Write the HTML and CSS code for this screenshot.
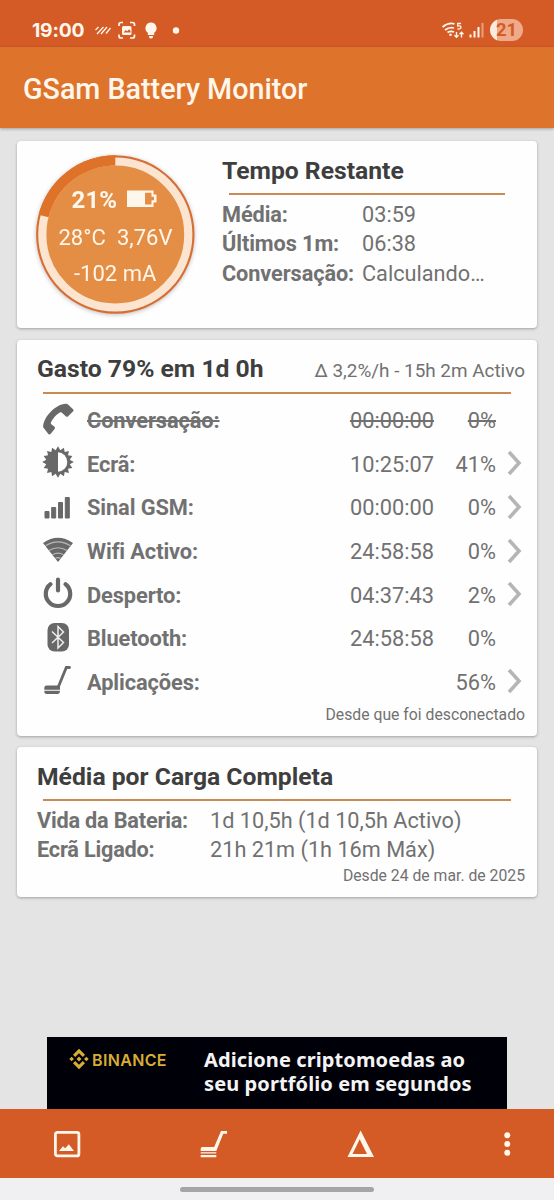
FILE: index.html
```html
<!DOCTYPE html>
<html lang="pt">
<head>
<meta charset="utf-8">
<title>GSam Battery Monitor</title>
<link rel="stylesheet" href="styles.css">
</head>
<body>
<div class="screen">
  <header class="statusbar">
    <span class="clock">19:00</span>
    <svg class="notif" width="90" height="22" viewBox="93 19 90 22" fill="none" stroke="#fff6ec">
      <path d="M95.5 30.500l3-3M97 34.500l6.500-7M101 34.500l6-7M106 34l4.500-5.500" stroke-width="1.300" transform="translate(0 -.5)"/>
      <path d="M119 26v-1.500q0-2 2-2h2M130 22.500h2.500q2 0 2 2V26M134.500 34.500v1.500q0 2-2 2H130M123 38h-2q-2 0-2-2v-1.500" stroke-width="1.700"/>
      <rect x="122" y="26" width="9.500" height="9" rx="1.500" fill="#fff6ec" stroke="none"/>
      <path d="M123.500 32.500l2.300-2.500 1.500 1.200 1.800-2 1.400 1.800v1.500z" fill="#d45b26" stroke="none"/>
      <path d="M151 22.500a5.700 5.700 0 0 0-3.200 10.300V35h6.400v-2.200A5.700 5.700 0 0 0 151 22.500zM149 36h4v1q-.5 1.500-2 1.500t-2-1.500z" fill="#fff6ec" stroke="none"/>
      <circle cx="176" cy="30.500" r="3.200" fill="#fff6ec" stroke="none"/>
    </svg>
    <svg class="signal" width="43" height="22" viewBox="440 19 43 22" fill="none" stroke="#fff6ec">
      <path d="M441.500 27q6.500-5 12-3M444 30q4.500-3.500 9-2M446.500 32.500q3-2 6.500-.5" stroke-width="1.700"/>
      <circle cx="449.500" cy="34.700" r="1.300" fill="#fff6ec" stroke="none"/>
      <path d="M460 23.500h-3.300v2.500q3.300-.6 3.300 1.500 0 1.700-3.500 1.500" stroke-width="1.300"/>
      <path d="M455.500 32v5M453.500 35.300l2 2 2-2M460.500 37.500v-5M458.500 34.200l2-2 2 2" stroke-width="1.400"/>
      <path d="M469.500 34.500v3M473.500 31v6.500M477.500 27v10.500" stroke-width="2"/>
      <path d="M481.500 23v14.500" stroke-width="2" opacity=".45"/>
    </svg>
    <span class="battery">21</span>
  </header>
  <div class="appbar"><h1>GSam Battery Monitor</h1></div>

  <main class="content">
    <section class="card summary">
      <svg class="gauge" width="166" height="172" viewBox="32 151 166 172">
        <circle cx="115.300" cy="234.500" r="79.200" fill="#d76d32"/>
        <circle cx="115.300" cy="234.500" r="73" fill="#e48e45" stroke="#fbe5d0" stroke-width="8.200"/>
        <path d="M115.300 155.300A79.200 79.200 0 0 0 38.600 214.800L48.500 217.300A69 69 0 0 1 115.300 165.500z" fill="#de7228"/>
        <g class="gauge-text">
          <text class="level" x="71.500" y="207.500" textLength="45.500">21%</text>
          <text x="58.500" y="245">28°C</text>
          <text x="117" y="245">3,76V</text>
          <text x="74" y="281">-102 mA</text>
        </g>
        <path d="M127 190.500h26.500v4h3v8h-3v4.500H127zM145 192.700v11.800h6.500v-4.200h2.500v-3.600h-2.500v-4z" fill="#fff6ec" fill-rule="evenodd"/>
      </svg>
      <div class="remaining">
        <h2>Tempo Restante</h2>
        <hr>
        <dl>
          <dt>Média:</dt><dd>03:59</dd>
          <dt>Últimos 1m:</dt><dd>06:38</dd>
          <dt>Conversação:</dt><dd>Calculando…</dd>
        </dl>
      </div>
    </section>

    <section class="card usage">
      <div class="head"><h2>Gasto 79% em 1d 0h</h2><span class="rate">Δ 3,2%/h - 15h 2m Activo</span></div>
      <hr>
      <ul>
        <li class="off">
          <svg viewBox="0 0 34 34"><path d="M2.300 25.500C1.200 17.500 12.500 3 24 1.700q2.200-.2 3.600 1.200l4.700 4.600q.6.900-.1 1.700l-5.300 5.300q-1 .7-1.900-.1l-4.300-3.900q-1.200-.7-2.400.3-5.600 3.800-8.400 9.700-.5 1 .4 1.800l3.200 2.500q.9.900.3 1.900l-4.300 5.200q-.9.800-1.900.3z" fill="#686868"/></svg>
          <span class="name">Conversação:</span><span class="time">00:00:00</span><span class="pct">0%</span>
        </li>
        <li>
          <svg viewBox="0 0 34 34" fill="#686868"><path id="rays" d="M17 17V1.200L19.340 5.230 22.930 2.680 23.670 7.020 27.960 6.040 26.980 10.330 31.320 11.070 28.770 14.660 32.800 17z"/><use href="#rays" transform="rotate(90 17 17)"/><use href="#rays" transform="rotate(180 17 17)"/><use href="#rays" transform="rotate(270 17 17)"/><circle cx="17" cy="17" r="10"/><path d="M17 7.300a9.300 9.700 0 0 1 0 19.400z" fill="#fff"/></svg>
          <span class="name">Ecrã:</span><span class="time">10:25:07</span><span class="pct">41%</span><svg class="chev" viewBox="0 0 16 26"><path d="M2 2l10 11L2 24"/></svg>
        </li>
        <li>
          <svg viewBox="0 0 34 34"><path d="M4 22.500h4V29H4zM10.700 18.500h4V29h-4zM17.500 13.500h4V29h-4zM24.300 8.500h4V29h-4z" fill="#686868" stroke="#686868"/></svg>
          <span class="name">Sinal GSM:</span><span class="time">00:00:00</span><span class="pct">0%</span><svg class="chev" viewBox="0 0 16 26"><path d="M2 2l10 11L2 24"/></svg>
        </li>
        <li>
          <svg viewBox="0 0 34 34"><path d="M2 10Q17-.5 32 10L17 29z" fill="#686868"/><path d="M4.500 12.800q12.500-8 25 0M8 17.500q9-5.500 18 0M11.500 21.700q5.500-3 11 0M14.300 25.300q2.700-1.500 5.400 0" fill="none" stroke="#b9b9b9" stroke-width="1.200"/></svg>
          <span class="name">Wifi Activo:</span><span class="time">24:58:58</span><span class="pct">0%</span><svg class="chev" viewBox="0 0 16 26"><path d="M2 2l10 11L2 24"/></svg>
        </li>
        <li>
          <svg viewBox="0 0 34 34"><path d="M9.500 8.200a12.200 12.200 0 1 0 15 0M17 3.500v11" fill="none" stroke="#686868" stroke-width="4.200" stroke-linecap="round"/></svg>
          <span class="name">Desperto:</span><span class="time">04:37:43</span><span class="pct">2%</span><svg class="chev" viewBox="0 0 16 26"><path d="M2 2l10 11L2 24"/></svg>
        </li>
        <li>
          <svg viewBox="0 0 34 34"><rect x="6.500" y="3" width="21.500" height="28.500" rx="7" fill="#686868"/><path d="M11 11.500l11.500 11-5.500 5.500V6.500l5.500 5.500L11 23" fill="none" stroke="#eee" stroke-width="1.500"/></svg>
          <span class="name">Bluetooth:</span><span class="time">24:58:58</span><span class="pct">0%</span>
        </li>
        <li>
          <svg viewBox="0 0 34 34"><path d="M28.500 4.500h-3.200L17.500 23.500" fill="none" stroke="#686868" stroke-width="2.800" stroke-linecap="round"/><path d="M5.500 22.500H19v4.300H3.300v-2q.2-2.300 2.200-2.300zM3.300 27.800H19q-.3 3.200-2.300 3.200H5.500q-2.200 0-2.200-3.200z" fill="#686868"/></svg>
          <span class="name">Aplicações:</span><span class="time"></span><span class="pct">56%</span><svg class="chev" viewBox="0 0 16 26"><path d="M2 2l10 11L2 24"/></svg>
        </li>
      </ul>
      <p class="since">Desde que foi desconectado</p>
    </section>

    <section class="card average">
      <h2>Média por Carga Completa</h2>
      <hr>
      <dl>
        <dt>Vida da Bateria:</dt><dd>1d 10,5h (1d 10,5h Activo)</dd>
        <dt>Ecrã Ligado:</dt><dd>21h 21m (1h 16m Máx)</dd>
      </dl>
      <p class="since">Desde 24 de mar. de 2025</p>
    </section>
  </main>

  <aside class="ad">
    <svg width="20" height="22" viewBox="0 0 20 22" fill="#d9ad35"><path d="M10 .8l6 6-2.200 2.300L10 5.200 6.200 9.100 4 6.800zM10 21.200l6-6-2.200-2.300-3.800 3.900-3.800-3.900L4 15.200zM10 8.500l2.500 2.500L10 13.500 7.500 11zM2.600 8.700L5 11l-2.400 2.300L.3 11zM17.400 8.700l2.300 2.300-2.300 2.300L15 11z"/></svg>
    <span class="brand">BINANCE</span>
    <p>Adicione criptomoedas ao<br>seu portfólio em segundos</p>
  </aside>
  <nav class="toolbar">
    <svg width="28" height="28" viewBox="0 0 28 28"><rect x="2.400" y="2.400" width="23.500" height="23.500" rx="2" fill="none" stroke="#fff6ec" stroke-width="2.800"/><path d="M6 21l4-4.700 2.200 2 3.700-4 5 6.700z" fill="#fff6ec"/></svg>
    <svg width="30" height="28" viewBox="0 0 30 28"><path d="M1.700 21v-2.500q0-1.500 1.500-1.500h12L22 1h6v2.800h-3.800L17.300 21zM1.700 22.300h15.600v1.200H1.700zM1.700 25h15.600v2.200H1.700z" fill="#fff6ec"/></svg>
    <svg width="28" height="28" viewBox="0 0 28 28"><path d="M13.600 .5L27 27H.5zM12.700 9.200L5.500 24H20z" fill="#fff6ec" fill-rule="evenodd"/></svg>
    <svg width="10" height="28" viewBox="0 0 10 28" fill="#fff6ec"><circle cx="5.300" cy="5.300" r="3"/><circle cx="5.300" cy="14" r="3"/><circle cx="5.300" cy="22.800" r="3"/></svg>
  </nav>
  <footer class="gesture"><span></span></footer>
</div>
</body>
</html>
```
FILE: styles.css
```css
* { box-sizing: border-box; margin: 0; padding: 0; }
body { font-family: Roboto, "Liberation Sans", sans-serif; color: #717171; background: #e4e4e4; }
.screen { width: 554px; height: 1200px; display: flex; flex-direction: column; overflow: hidden; white-space: nowrap; }

.statusbar { height: 47px; flex: none; background: #d45b26; display: flex; align-items: center; padding: 13px 31px 0 32px; color: #fff6ec; }
.clock { font-family: Inter, sans-serif; font-weight: 700; font-size: 19.300px; width: 61px; letter-spacing: -.2px; }
.notif { flex: none; }
.signal { margin-left: auto; flex: none; }
.battery { margin-left: 6px; width: 33px; height: 22px; border-radius: 11px; background: linear-gradient(90deg, #fdeade 7px, #efaa8a 7px); color: #d45b26; font: 700 18.500px/22px Roboto, sans-serif; text-align: center; }
.appbar { height: 81px; flex: none; background: #de742c; padding: 26px 23px; position: relative; box-shadow: 0 1px 3px rgba(0,0,0,.3); }
.appbar h1 { font-weight: 500; font-size: 28.700px; line-height: 32px; color: #fff6ec; }

.content { flex: 1; padding: 13px 17px 0; }
.card { background: #fefefe; border-radius: 4px; box-shadow: 0 1px 3px rgba(0,0,0,.3); }
.card h2 { color: #3e3e3e; font-size: 24.700px; line-height: 28px; font-weight: 700; }
.card hr { border: 0; height: 2px; background: #cc8a53; }
dl { display: grid; font-size: 21.700px; line-height: 29.300px; }
dt { font-weight: 700; letter-spacing: -.08px; }

.summary { height: 187px; margin-bottom: 12px; display: flex; padding: 10px 32px 0 15px; }
.gauge { flex: none; filter: drop-shadow(0 1px 2px rgba(0,0,0,.25)); }
.gauge-text { fill: #fff6ec; font-size: 22px; }
.level { font-weight: 700; font-size: 24px; }
.remaining { flex: 1; margin-left: 24px; padding-top: 6px; }
.remaining hr { margin: 8px 0 5px 7px; }
.remaining dl { grid-template-columns: 140px 1fr; }

.usage { height: 396px; margin-bottom: 11px; padding: 15px 12px 0 20px; }
.head { display: flex; justify-content: space-between; align-items: baseline; }
.rate { font-size: 18.900px; }
.usage hr { margin: 9px 14px 5px 6px; }
.usage ul { list-style: none; font-size: 21.800px; }
.usage li { height: 43.600px; display: grid; grid-template-columns: 50px 250px 97px 62px 12px 16px; align-items: center; }
.usage li > svg:first-child { width: 34px; height: 34px; margin-left: 4px; margin-top: -4px; }
.usage li > .chev { grid-column: 6; width: 16px; height: 26px; margin-left: -1px; margin-top: -2px; fill: none; stroke: #b5b5b5; stroke-width: 3.600; }
.name { font-weight: 700; letter-spacing: -.1px; }
.time, .pct { text-align: right; }
.off span { text-decoration: line-through; text-decoration-thickness: 1.500px; }
.since { text-align: right; font-size: 15.750px; line-height: 20px; padding-top: 1px; }

.average { height: 150px; padding: 16px 12px 0 20px; }
.average hr { margin: 8px 14px 5px 6px; }
.average dl { grid-template-columns: 173px 1fr; }
.average dt { letter-spacing: -.2px; }

.ad { height: 72px; flex: none; margin: 0 47px; background: #000009; display: flex; align-items: flex-start; padding: 11px 0 0 22px; }
.brand { font-family: Inter, sans-serif; font-weight: 600; font-size: 16px; letter-spacing: .35px; line-height: 24px; color: #d9ad35; margin-left: 3px; width: 112px; }
.ad p { font-family: "Noto Sans", sans-serif; font-weight: 700; font-size: 20px; letter-spacing: .1px; line-height: 24px; color: #f4f4f4; }
.toolbar { height: 69px; flex: none; background: #d45b26; display: grid; grid-template-columns: 146px 148px 155px 10px; align-items: center; padding: 1px 0 0 53px; }
.gesture { height: 22px; flex: none; background: #f0f0f2; padding-top: 9px; }
.gesture span { display: block; width: 194px; height: 5px; border-radius: 3px; background: #a5a5a7; margin: 0 auto; }
```
